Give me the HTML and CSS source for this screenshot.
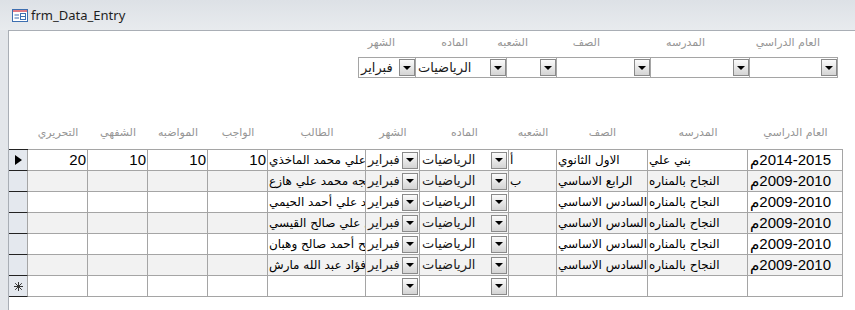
FILE: index.html
```html
<!DOCTYPE html>
<html lang="ar">
<head>
    <meta charset="UTF-8">
    <title>frm_Data_Entry</title>
    <link rel="stylesheet" href="styles.css">
</head>
<body>
<div class="window">
    <div class="titlebar">
        <svg class="form-icon" width="16" height="13" viewBox="0 0 16 13">
            <rect x="0.5" y="0.5" width="15" height="12" fill="#fff" stroke="#3d6fb0"/>
            <rect x="1" y="1" width="14" height="2" fill="#e07a84"/>
            <line x1="2.5" y1="6" x2="7" y2="6" stroke="#3d6fb0"/>
            <line x1="2.5" y1="9" x2="7" y2="9" stroke="#3d6fb0"/>
            <rect x="8.5" y="4.5" width="5" height="6" fill="none" stroke="#3d6fb0"/>
            <line x1="9" y1="7.5" x2="13" y2="7.5" stroke="#3d6fb0"/>
        </svg>
        <span>frm_Data_Entry</span>
    </div>
    <div class="frame">
        <div class="frame-edge"></div>
        <div class="content">
            <div class="filter-labels">
                <span class="fl fl-month">الشهر</span>
                <span class="fl fl-subject">الماده</span>
                <span class="fl fl-section">الشعبه</span>
                <span class="fl fl-grade">الصف</span>
                <span class="fl fl-school">المدرسه</span>
                <span class="fl fl-year">العام الدراسي</span>
            </div>
            <div class="filter-combos">
                <div class="combo w-month"><span class="ar">فبراير</span><span class="drop"></span></div>
                <div class="combo w-subject"><span class="ar">الرياضيات</span><span class="drop"></span></div>
                <div class="combo w-section"><span></span><span class="drop"></span></div>
                <div class="combo w-grade"><span></span><span class="drop"></span></div>
                <div class="combo w-school"><span></span><span class="drop"></span></div>
                <div class="combo w-year"><span></span><span class="drop"></span></div>
            </div>

            <div class="sheet-head cols">
                <span></span>
                <span class="hl">التحريري</span>
                <span class="hl">الشفهي</span>
                <span class="hl">المواضبه</span>
                <span class="hl">الواجب</span>
                <span class="hl">الطالب</span>
                <span class="hl">الشهر</span>
                <span class="hl">الماده</span>
                <span class="hl">الشعبه</span>
                <span class="hl">الصف</span>
                <span class="hl">المدرسه</span>
                <span class="hl">العام الدراسي</span>
            </div>

            <div class="rows">
                <div class="row cols">
                    <div class="sel"><span class="current"></span></div>
                    <div class="cell num">20</div>
                    <div class="cell num">10</div>
                    <div class="cell num">10</div>
                    <div class="cell num">10</div>
                    <div class="cell ar name">علي محمد الماخذي</div>
                    <div class="cell cb"><span class="ar">فبراير</span><span class="drop"></span></div>
                    <div class="cell cb"><span class="ar">الرياضيات</span><span class="drop"></span></div>
                    <div class="cell ar">أ</div>
                    <div class="cell ar">الاول الثانوي</div>
                    <div class="cell ar">بني علي</div>
                    <div class="cell">م&lrm;2014-2015</div>
                </div>
                <div class="row cols">
                    <div class="sel"></div>
                    <div class="cell num"></div>
                    <div class="cell num"></div>
                    <div class="cell num"></div>
                    <div class="cell num"></div>
                    <div class="cell ar name">خديجه محمد علي هازع</div>
                    <div class="cell cb"><span class="ar">فبراير</span><span class="drop"></span></div>
                    <div class="cell cb"><span class="ar">الرياضيات</span><span class="drop"></span></div>
                    <div class="cell ar">ب</div>
                    <div class="cell ar">الرابع الاساسي</div>
                    <div class="cell ar">النجاح بالمناره</div>
                    <div class="cell">م&lrm;2009-2010</div>
                </div>
                <div class="row cols">
                    <div class="sel"></div>
                    <div class="cell num"></div>
                    <div class="cell num"></div>
                    <div class="cell num"></div>
                    <div class="cell num"></div>
                    <div class="cell ar name">خالد علي أحمد الحيمي</div>
                    <div class="cell cb"><span class="ar">فبراير</span><span class="drop"></span></div>
                    <div class="cell cb"><span class="ar">الرياضيات</span><span class="drop"></span></div>
                    <div class="cell ar"></div>
                    <div class="cell ar">السادس الاساسي</div>
                    <div class="cell ar">النجاح بالمناره</div>
                    <div class="cell">م&lrm;2009-2010</div>
                </div>
                <div class="row cols">
                    <div class="sel"></div>
                    <div class="cell num"></div>
                    <div class="cell num"></div>
                    <div class="cell num"></div>
                    <div class="cell num"></div>
                    <div class="cell ar name">جلال علي صالح القيسي</div>
                    <div class="cell cb"><span class="ar">فبراير</span><span class="drop"></span></div>
                    <div class="cell cb"><span class="ar">الرياضيات</span><span class="drop"></span></div>
                    <div class="cell ar"></div>
                    <div class="cell ar">السادس الاساسي</div>
                    <div class="cell ar">النجاح بالمناره</div>
                    <div class="cell">م&lrm;2009-2010</div>
                </div>
                <div class="row cols">
                    <div class="sel"></div>
                    <div class="cell num"></div>
                    <div class="cell num"></div>
                    <div class="cell num"></div>
                    <div class="cell num"></div>
                    <div class="cell ar name">صالح أحمد صالح وهبان</div>
                    <div class="cell cb"><span class="ar">فبراير</span><span class="drop"></span></div>
                    <div class="cell cb"><span class="ar">الرياضيات</span><span class="drop"></span></div>
                    <div class="cell ar"></div>
                    <div class="cell ar">السادس الاساسي</div>
                    <div class="cell ar">النجاح بالمناره</div>
                    <div class="cell">م&lrm;2009-2010</div>
                </div>
                <div class="row cols">
                    <div class="sel"></div>
                    <div class="cell num"></div>
                    <div class="cell num"></div>
                    <div class="cell num"></div>
                    <div class="cell num"></div>
                    <div class="cell ar name">ابراهيم فؤاد عبد الله مارش</div>
                    <div class="cell cb"><span class="ar">فبراير</span><span class="drop"></span></div>
                    <div class="cell cb"><span class="ar">الرياضيات</span><span class="drop"></span></div>
                    <div class="cell ar"></div>
                    <div class="cell ar">السادس الاساسي</div>
                    <div class="cell ar">النجاح بالمناره</div>
                    <div class="cell">م&lrm;2009-2010</div>
                </div>
                <div class="row cols new-row">
                    <div class="sel">
                        <svg width="9" height="9" viewBox="0 0 9 9" stroke="#333" stroke-width="1">
                            <line x1="4.5" y1="0" x2="4.5" y2="9"/>
                            <line x1="0" y1="4.5" x2="9" y2="4.5"/>
                            <line x1="1.2" y1="1.2" x2="7.8" y2="7.8"/>
                            <line x1="7.8" y1="1.2" x2="1.2" y2="7.8"/>
                        </svg>
                    </div>
                    <div class="cell num"></div>
                    <div class="cell num"></div>
                    <div class="cell num"></div>
                    <div class="cell num"></div>
                    <div class="cell ar"></div>
                    <div class="cell cb"><span></span><span class="drop"></span></div>
                    <div class="cell cb"><span></span><span class="drop"></span></div>
                    <div class="cell"></div>
                    <div class="cell"></div>
                    <div class="cell"></div>
                    <div class="cell"></div>
                </div>
            </div>
        </div>
    </div>
</div>
</body>
</html>
```

FILE: styles.css
```css
body {
    margin: 0;
    background: #fff;
    font-family: "Liberation Sans", "DejaVu Sans", sans-serif;
    overflow: hidden;
}

.window {
    width: 855px;
    height: 310px;
    display: flex;
    flex-direction: column;
    background: #e3e6ea;
}

.titlebar {
    height: 30px;
    display: flex;
    align-items: center;
    gap: 3px;
    padding-left: 12px;
    background: linear-gradient(#dde1e6, #e8ebee);
    font-family: "Noto Sans", sans-serif;
    font-size: 13px;
    color: #1e1e1e;
}

.frame {
    flex: 1;
    display: flex;
}

.frame-edge {
    width: 8px;
    border-right: 1px solid #a9aeb5;
}

.content {
    flex: 1;
    background: #fff;
    border-top: 1px solid #a9aeb5;
}

/* filter area */
.filter-labels {
    display: flex;
    height: 16px;
    margin: 4px 0 0 349px;
}

.fl {
    text-align: right;
    color: #959595;
    font-family: "DejaVu Sans", sans-serif;
    font-size: 11px;
    line-height: 16px;
    white-space: nowrap;
}

.fl-month { width: 37px; }
.fl-subject { width: 73px; }
.fl-section { width: 60px; }
.fl-grade { width: 72px; }
.fl-school { width: 105px; }
.fl-year { width: 115px; }

.filter-combos {
    display: flex;
    margin: 6px 0 0 349px;
}

.combo {
    height: 21px;
    box-sizing: border-box;
    border: 1px solid #a5a5a5;
    background: #fff;
    display: flex;
    align-items: center;
    justify-content: space-between;
    padding: 0 0 0 2px;
    margin-left: -1px;
}

.combo:first-child {
    margin-left: 0;
}

.w-month { width: 58px; }
.w-subject { width: 92px; }
.w-section { width: 51px; }
.w-grade { width: 95px; }
.w-school { width: 100px; }
.w-year { width: 89px; }

.drop {
    width: 16px;
    height: 17px;
    box-sizing: border-box;
    border: 1px solid #8a8a8a;
    background: linear-gradient(#fbfbfb, #d4d4d4);
    display: flex;
    align-items: center;
    justify-content: center;
    flex-shrink: 0;
}

.drop::after {
    content: "";
    border-left: 4px solid transparent;
    border-right: 4px solid transparent;
    border-top: 4px solid #000;
}

.ar {
    font-family: "DejaVu Sans", sans-serif;
    font-size: 13px;
    color: #1a1a1a;
}

/* datasheet */
.cols {
    display: grid;
    grid-template-columns: 19px 60px 60px 60px 60px 98px 54px 89px 48px 91px 100px 95px;
}

.sheet-head {
    margin-top: 46px;
    height: 25px;
}

.hl {
    text-align: center;
    color: #959595;
    font-family: "DejaVu Sans", sans-serif;
    font-size: 11px;
    line-height: 18px;
    white-space: nowrap;
}

.rows {
    width: 834px;
    border-top: 1px solid #a5a5a5;
}

.row > div {
    height: 21px;
    box-sizing: border-box;
}

.cell {
    border-right: 1px solid #a5a5a5;
    border-bottom: 1px solid #a5a5a5;
    padding: 0 2px;
    line-height: 20px;
    font-size: 15px;
    color: #000;
    white-space: nowrap;
    overflow: hidden;
    text-align: left;
}

.cell.ar {
    font-size: 12px;
    padding-left: 1px;
}

.row:nth-child(even) .cell {
    background: #f2f2f2;
}

.cell.num {
    text-align: right;
    padding: 0 1px 0 0;
}

.cell.cb {
    display: flex;
    align-items: center;
    justify-content: space-between;
    padding: 0 1px 0 2px;
}

.sel {
    background: #e4e8ee;
    border-right: 1px solid #a5a5a5;
    border-bottom: 1px solid #222;
    display: flex;
    align-items: center;
    justify-content: center;
}

.row:first-child .sel {
    box-shadow: 0 -1px 0 #222;
}

.current {
    width: 0;
    height: 0;
    border-top: 5px solid transparent;
    border-bottom: 5px solid transparent;
    border-left: 7px solid #000;
}
```
